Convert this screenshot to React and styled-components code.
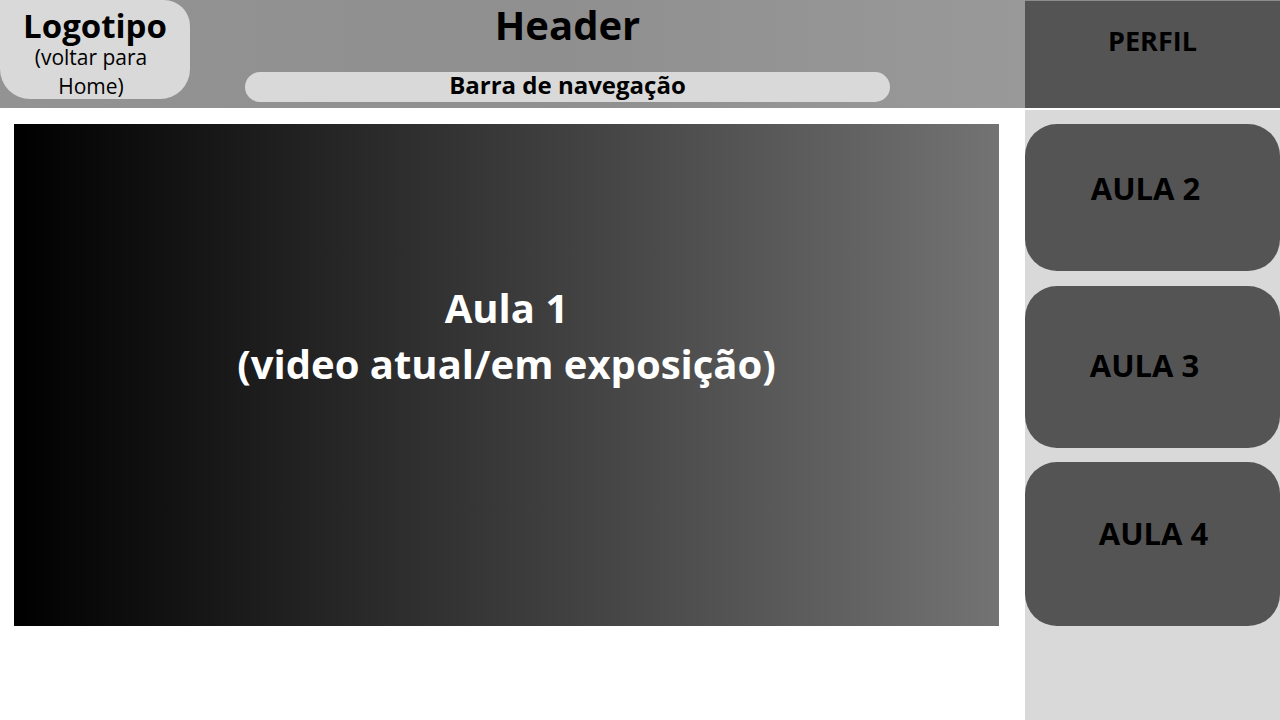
import React from "react";
import styled, { createGlobalStyle } from "styled-components";

const GlobalStyle = createGlobalStyle`
	html, body {
		margin: 0;
		padding: 0;
		background: #ffffff;
		font-family: "Open Sans", "Liberation Sans", sans-serif;
	}
	* {
		box-sizing: border-box;
	}
`;

const Page = styled.div`
	display: grid;
	grid-template-columns: 1025px 255px;
	grid-template-rows: 108px 612px;
	width: 1280px;
	height: 720px;
	overflow: hidden;
`;

const Header = styled.header`
	display: flex;
	align-items: flex-start;
	background: linear-gradient(90deg, #939393 0%, #8f8f8f 55%, #999999 100%);
`;

const Logo = styled.div`
	width: 190px;
	height: 99px;
	background-color: #d9d9d9;
	border-radius: 0 26px 30px 30px;
	padding-top: 9px;
	padding-right: 8px;
	display: flex;
	flex-direction: column;
	align-items: center;
	color: #000;
`;

const LogoTitle = styled.div`
	font-size: 33px;
	font-weight: 700;
	line-height: 34px;
	padding-left: 8px;
`;

const LogoSub = styled.div`
	font-size: 21px;
	font-weight: 400;
	line-height: 29px;
	max-width: 135px;
	text-align: center;
`;

const NavColumn = styled.div`
	width: 645px;
	margin-left: 55px;
	display: flex;
	flex-direction: column;
	align-items: center;
`;

const Title = styled.h1`
	margin: 3px 0 0;
	font-size: 40px;
	font-weight: 700;
	line-height: 44px;
	color: #000;
`;

const NavBar = styled.nav`
	margin-top: 25px;
	width: 100%;
	height: 30px;
	border-radius: 15px;
	background-color: #d9d9d9;
	text-align: center;
	font-size: 24px;
	font-weight: 700;
	line-height: 24px;
	padding-top: 1px;
	color: #000;
`;

const Profile = styled.div`
	background-color: #545454;
	border-top: 1px solid #8c8c8c;
	padding-top: 22px;
	text-align: center;
	font-size: 27px;
	font-weight: 700;
	line-height: 36px;
	color: #000;
`;

const Main = styled.main`
	background: #ffffff;
	padding: 16px 26px 0 14px;
`;

const Video = styled.section`
	height: 502px;
	background: linear-gradient(90deg, #000000 0%, #737373 100%);
	padding-top: 156px;
	text-align: center;
	color: #ffffff;
	font-size: 40px;
	font-weight: 700;
	line-height: 56px;
`;

const Sidebar = styled.aside`
	margin-top: 2px;
	background-color: #d9d9d9;
	padding-top: 14px;
	display: flex;
	flex-direction: column;
`;

const Lesson = styled.div`
	height: ${(p) => p.$height}px;
	margin-bottom: ${(p) => p.$gap}px;
	background-color: #545454;
	border-radius: 32px;
	padding-top: ${(p) => p.$top}px;
	padding-left: ${(p) => Math.max(0, p.$dx * 2)}px;
	padding-right: ${(p) => Math.max(0, -p.$dx * 2)}px;
	text-align: center;
	font-size: 31px;
	font-weight: 700;
	line-height: 40px;
	color: #000;
`;

const lessons = [
	{ name: "AULA 2", height: 147, gap: 15, top: 44, dx: -7 },
	{ name: "AULA 3", height: 162, gap: 14, top: 59, dx: -8 },
	{ name: "AULA 4", height: 164, gap: 0, top: 51, dx: 1 },
];

const App = () => {
	return (
		<>
			<GlobalStyle />
			<Page>
				<Header>
					<Logo>
						<LogoTitle>Logotipo</LogoTitle>
						<LogoSub>(voltar para Home)</LogoSub>
					</Logo>
					<NavColumn>
						<Title>Header</Title>
						<NavBar>Barra de navegação</NavBar>
					</NavColumn>
				</Header>
				<Profile>PERFIL</Profile>
				<Main>
					<Video>
						Aula 1
						<br />
						(video atual/em exposição)
					</Video>
				</Main>
				<Sidebar>
					{lessons.map((l) => (
						<Lesson
							key={l.name}
							$height={l.height}
							$gap={l.gap}
							$top={l.top}
							$dx={l.dx}
						>
							{l.name}
						</Lesson>
					))}
				</Sidebar>
			</Page>
		</>
	);
};

export default App;
